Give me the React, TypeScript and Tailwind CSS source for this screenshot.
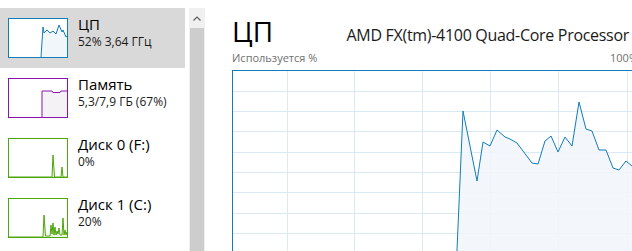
import React from "react";

const font = { fontFamily: '"Segoe UI", "Open Sans", "Noto Sans", sans-serif' };

type Thumb = {
  stroke: string;
  fill: string;
  line: string;
  area: string;
};

function Thumbnail({ stroke, fill, line, area }: Thumb) {
  return (
    <svg width="60" height="40" viewBox="0 0 60 40" className="block shrink-0">
      <rect x="0.5" y="0.5" width="59" height="39" fill="#ffffff" stroke={stroke} />
      <polygon points={area} fill={fill} />
      <polyline points={line} fill="none" stroke={stroke} strokeWidth="1" strokeLinejoin="round" />
      <rect x="0.5" y="0.5" width="59" height="39" fill="none" stroke={stroke} />
    </svg>
  );
}

const cpuLine = "33,39 35,9 36,15 39,12 42,15 45,13 48,16 51,7 54,14 55,12 58,19 60,17";
const memLine = "34,40 34,13 44,13 45,14.5 52,14.5 53,13 60,13";
const disk0Line = "0,39 44,39 45,17 46.5,39 53,39 54,29 55,39 60,39";
const disk1Line =
  "0,39 35,39 36,17 37.5,38 42,38 43,27 44,36 45,25 46,37 47,29 48,37 49,33 50,36 51,30 52,37 54,37 55,20 56,37 57,32 58,37 59,34 60,37";

const rows = [
  {
    title: "ЦП",
    sub: "52% 3,64 ГГц",
    selected: true,
    thumb: { stroke: "#117dbb", fill: "#f1f6fa", line: cpuLine, area: cpuLine + " 60,40 33,40" },
  },
  {
    title: "Память",
    sub: "5,3/7,9 ГБ (67%)",
    selected: false,
    thumb: { stroke: "#8b12ae", fill: "#f4f2f4", line: memLine, area: memLine + " 60,40" },
  },
  {
    title: "Диск 0 (F:)",
    sub: "0%",
    selected: false,
    thumb: { stroke: "#4da60c", fill: "#eff7e9", line: disk0Line, area: disk0Line + " 60,40 0,40" },
  },
  {
    title: "Диск 1 (C:)",
    sub: "20%",
    selected: false,
    thumb: { stroke: "#4da60c", fill: "#eff7e9", line: disk1Line, area: disk1Line + " 60,40 0,40" },
  },
];

const vLines = [55, 122, 190, 258, 326, 395];
const hLines = [21, 41, 61, 82, 102, 122, 143, 163, 183];
const cpuPoints =
  "224,203 231,41 245,111 251,72 258,76 265,60 273,67 278,69 285,73 300,93 306,94 313,71 319,66 326,82 333,67 340,76 347,32 354,59 360,61 367,80 374,80 381,98 387,100 394,91 400,96 406,100";

function CpuGraph() {
  return (
    <svg width="406" height="204" viewBox="0 0 406 204" className="block">
      <rect x="0" y="0" width="406" height="204" fill="#ffffff" />
      {vLines.map((x) => (
        <line key={"v" + x} x1={x + 0.5} y1="0" x2={x + 0.5} y2="204" stroke="#d9eaf4" />
      ))}
      {hLines.map((y) => (
        <line key={"h" + y} x1="0" y1={y + 0.5} x2="406" y2={y + 0.5} stroke="#d9eaf4" />
      ))}
      <polygon points={cpuPoints + " 406,204 224,204"} fill="#f1f6fa" fillOpacity="0.85" />
      <polyline points={cpuPoints} fill="none" stroke="#117dbb" strokeWidth="1" strokeLinejoin="round" />
      <rect x="0.5" y="0.5" width="405" height="203" fill="none" stroke="#117dbb" />
    </svg>
  );
}

export default function App() {
  return (
    <div className="flex h-[251px] w-[632px] overflow-hidden bg-white" style={font}>
      <aside className="w-[185px] shrink-0 pt-[8px]">
        {rows.map((r) => (
          <div
            key={r.title}
            className={`flex h-[60px] items-start gap-[10px] pl-[8px] pt-[10px] ${r.selected ? "bg-[#d9d9d9]" : ""}`}
          >
            <Thumbnail {...r.thumb} />
            <div className="-mt-[4px] flex flex-col">
              <span className="text-[15px] leading-[20px] text-black">{r.title}</span>
              <span className="text-[12px] leading-[16px] text-[#1a1a1a]">{r.sub}</span>
            </div>
          </div>
        ))}
      </aside>
      <div className="ml-[4px] flex w-[16px] shrink-0 flex-col pt-[8px]">
        <div className="flex h-[20px] items-center justify-center bg-[#f0f0f0]">
          <svg width="8" height="5" viewBox="0 0 8 5">
            <polyline points="0.5,4.5 4,1 7.5,4.5" fill="none" stroke="#606060" strokeWidth="1.2" />
          </svg>
        </div>
        <div className="flex-1 bg-[#f0f0f0] px-[1px]">
          <div className="h-full bg-[#cdcdcd]" />
        </div>
      </div>
      <main className="ml-[27px] w-[406px] shrink-0">
        <div className="flex h-[48px] items-end justify-between">
          <span className="text-[28px] leading-[34px] text-black">ЦП</span>
          <span className="mb-[2px] mr-[9px] text-[16px] leading-[22px] tracking-[-0.3px] text-[#1a1a1a]">
            AMD FX(tm)-4100 Quad-Core Processor
          </span>
        </div>
        <div className="mt-[3px] flex h-[19px] items-start justify-between text-[11px] leading-[14px] text-[#707070]">
          <span>Используется %</span>
          <span>100%</span>
        </div>
        <CpuGraph />
      </main>
    </div>
  );
}
